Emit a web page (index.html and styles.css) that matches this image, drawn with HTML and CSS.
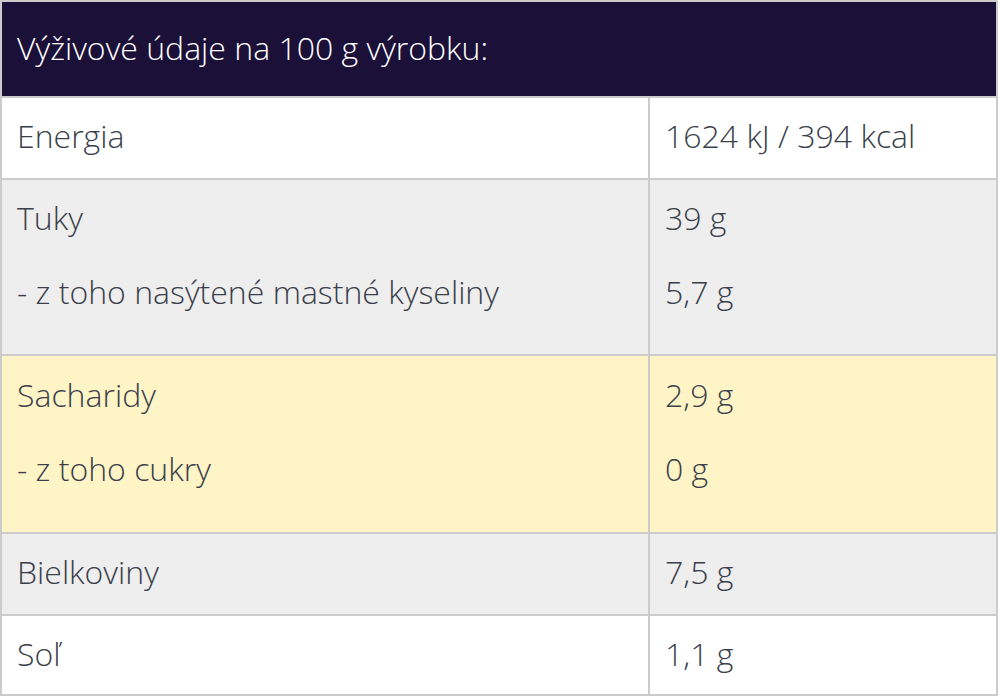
FILE: index.html
```html
<!DOCTYPE html>
<html lang="sk">
<head>
<meta charset="utf-8">
<title>Výživové údaje</title>
<link rel="stylesheet" href="styles.css">
</head>
<body>
<div class="table">
  <div class="head">Výživové údaje na 100 g výrobku:</div>

  <div class="cell name white"><p>Energia</p></div>
  <div class="cell value white"><p>1624 kJ / 394 kcal</p></div>

  <div class="cell name gray multi"><p>Tuky</p><p>- z toho nasýtené mastné kyseliny</p></div>
  <div class="cell value gray multi"><p>39 g</p><p>5,7 g</p></div>

  <div class="cell name yellow multi tall"><p>Sacharidy</p><p>- z toho cukry</p></div>
  <div class="cell value yellow multi tall"><p>2,9 g</p><p>0 g</p></div>

  <div class="cell name gray"><p>Bielkoviny</p></div>
  <div class="cell value gray"><p>7,5 g</p></div>

  <div class="cell name white last"><p>Soľ</p></div>
  <div class="cell value white last"><p>1,1 g</p></div>
</div>
</body>
</html>
```

FILE: styles.css
```css
html, body {
  margin: 0;
  padding: 0;
  background: #ffffff;
}

body {
  font-family: "Open Sans", "Liberation Sans", sans-serif;
  font-weight: 300;
  color: #3b3f4b;
}

.table {
  width: 998px;
  box-sizing: border-box;
  display: grid;
  grid-template-columns: 646px 346px;
  gap: 2px;
  padding: 2px;
  background: #cccccc;
}

.head {
  grid-column: 1 / span 2;
  background: #1b1038;
  color: #ffffff;
  font-size: 32px;
  line-height: 42px;
  padding: 25px 15px 27px;
}

.cell {
  font-size: 32px;
  line-height: 42px;
  padding: 17px 15px 21px;
  display: flex;
  flex-direction: column;
  gap: 32px;
}

.cell p {
  margin: 0;
}

.cell.multi {
  padding-bottom: 41px;
}

.cell.tall {
  padding-top: 18px;
  padding-bottom: 42px;
}

.cell.last {
  padding-bottom: 19px;
}

.white { background: #ffffff; }
.gray { background: #eeeeee; }
.yellow { background: #fef4c6; }
```
